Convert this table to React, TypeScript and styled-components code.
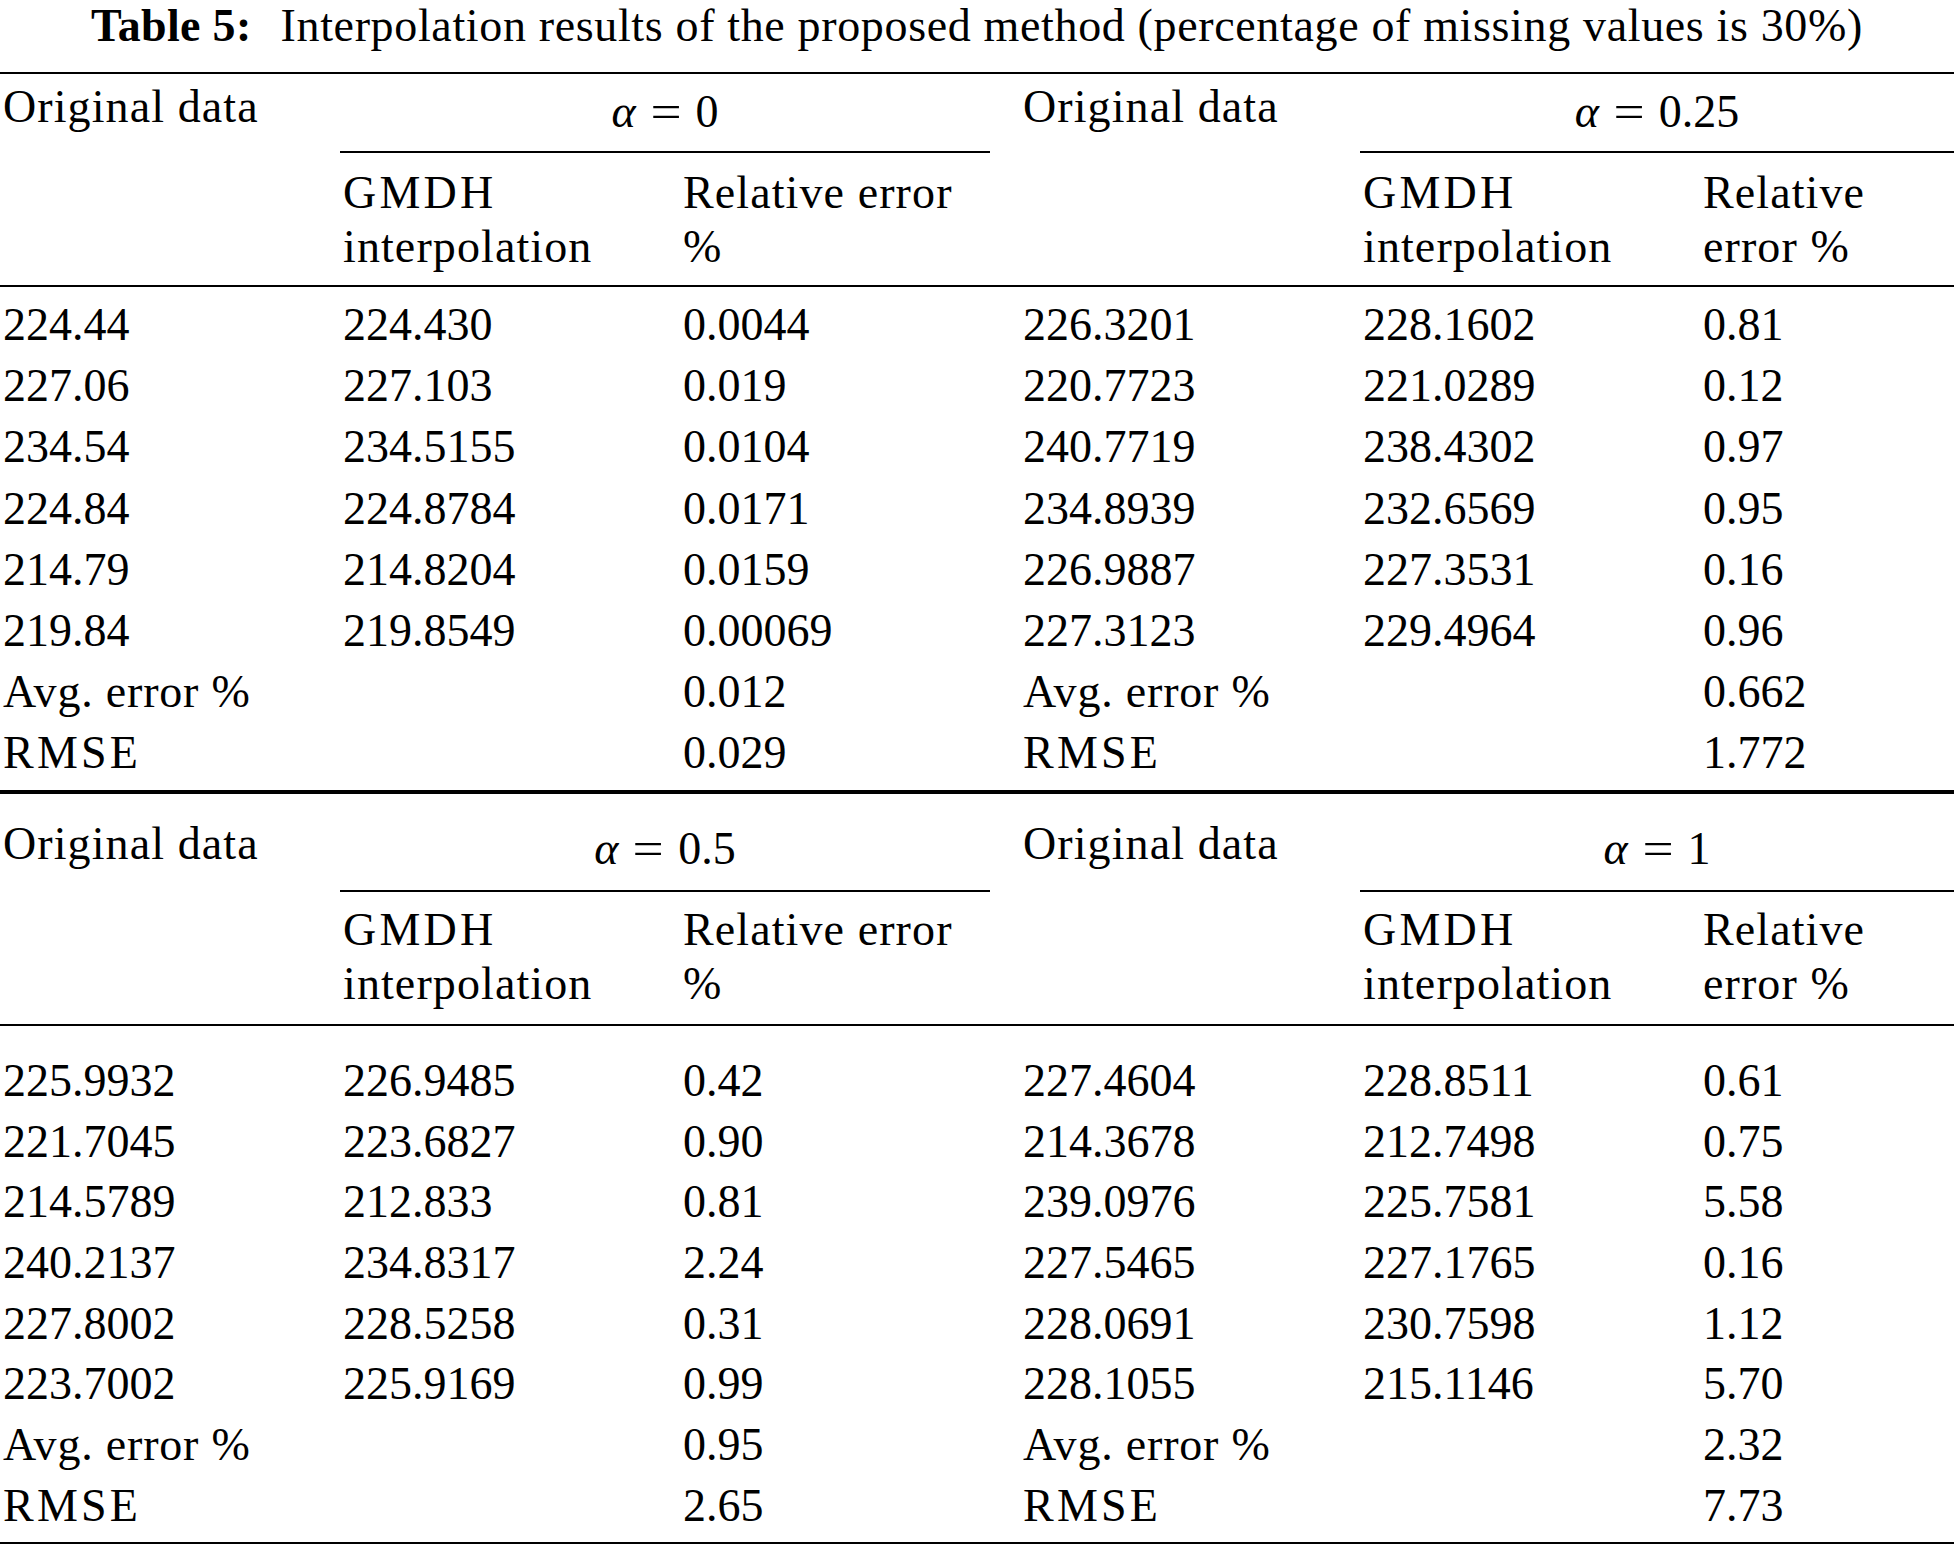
import React from "react";
import styled, { createGlobalStyle } from "styled-components";

const GlobalStyle = createGlobalStyle`
  html, body {
    margin: 0;
    padding: 0;
    background: #ffffff;
  }
  body {
    font-family: "Liberation Serif", "Times New Roman", serif;
    color: #000000;
  }
`;

const Page = styled.div`
  width: 1954px;
  font-size: 46px;
`;

const Caption = styled.div`
  height: 72px;
  line-height: 52px;
  text-align: center;
  white-space: nowrap;
  letter-spacing: 0.65px;
`;

const CaptionLabel = styled.b`
  font-weight: 700;
  margin-right: 29px;
  letter-spacing: 0.3px;
`;

const Block = styled.section`
  border-top: 2px solid #000;
  border-bottom: 2px solid #000;
`;

const Grid = styled.div`
  display: grid;
  grid-template-columns: repeat(5, 340px) 1fr;
  padding-left: 3px;
`;

const Head = styled(Grid)<{ $top: number; $bottom: number }>`
  padding-top: ${({ $top }) => $top}px;
  padding-bottom: ${({ $bottom }) => $bottom}px;
  border-bottom: 2px solid #000;
`;

const HeadLabel = styled.div`
  line-height: 54px;
  white-space: nowrap;
  letter-spacing: 1.1px;
`;

const GroupTitle = styled.div<{ $trim: number; $gap: number }>`
  grid-column: span 2;
  margin-left: -3px;
  margin-right: ${({ $trim }) => $trim}px;
  padding-top: 5px;
  padding-bottom: ${({ $gap }) => $gap}px;
  border-bottom: 2px solid #000;
  line-height: 54px;
  text-align: center;
  white-space: nowrap;
`;

const SubLabel = styled.div<{ $gap: number }>`
  padding-top: ${({ $gap }) => $gap}px;
  line-height: 54px;
  white-space: nowrap;
  letter-spacing: 1.1px;
`;

const Caps = styled.span`
  letter-spacing: 3.2px;
`;

const Alpha = styled.i`
  font-style: italic;
`;

const Eq = styled.span`
  display: inline-block;
  margin: 0 17px;
  transform: scaleX(1.2);
`;

const Body = styled(Grid)<{ $top: number; $bottom: number; $pitch: number }>`
  padding-top: ${({ $top }) => $top}px;
  padding-bottom: ${({ $bottom }) => $bottom}px;
  grid-auto-rows: ${({ $pitch }) => $pitch}px;
  line-height: ${({ $pitch }) => $pitch}px;
`;

const Cell = styled.div<{ $text?: boolean }>`
  white-space: nowrap;
  letter-spacing: ${({ $text }) => ($text ? "0.8px" : "0")};
`;

type Spacing = {
  headTop: number;
  titleGap: number;
  subGap: number;
  headBottom: number;
  bodyTop: number;
  bodyBottom: number;
  pitch: number;
};

const tableOne: string[][] = [
  ["224.44", "224.430", "0.0044", "226.3201", "228.1602", "0.81"],
  ["227.06", "227.103", "0.019", "220.7723", "221.0289", "0.12"],
  ["234.54", "234.5155", "0.0104", "240.7719", "238.4302", "0.97"],
  ["224.84", "224.8784", "0.0171", "234.8939", "232.6569", "0.95"],
  ["214.79", "214.8204", "0.0159", "226.9887", "227.3531", "0.16"],
  ["219.84", "219.8549", "0.00069", "227.3123", "229.4964", "0.96"],
  ["Avg. error %", "", "0.012", "Avg. error %", "", "0.662"],
  ["RMSE", "", "0.029", "RMSE", "", "1.772"],
];

const tableTwo: string[][] = [
  ["225.9932", "226.9485", "0.42", "227.4604", "228.8511", "0.61"],
  ["221.7045", "223.6827", "0.90", "214.3678", "212.7498", "0.75"],
  ["214.5789", "212.833", "0.81", "239.0976", "225.7581", "5.58"],
  ["240.2137", "234.8317", "2.24", "227.5465", "227.1765", "0.16"],
  ["227.8002", "228.5258", "0.31", "228.0691", "230.7598", "1.12"],
  ["223.7002", "225.9169", "0.99", "228.1055", "215.1146", "5.70"],
  ["Avg. error %", "", "0.95", "Avg. error %", "", "2.32"],
  ["RMSE", "", "2.65", "RMSE", "", "7.73"],
];

const AlphaTitle: React.FC<{ value: string }> = ({ value }) => (
  <>
    <Alpha>α</Alpha>
    <Eq>=</Eq>
    {value}
  </>
);

const renderValue = (value: string) =>
  value === "RMSE" ? <Caps>RMSE</Caps> : value;

interface ResultBlockProps {
  alphas: [string, string];
  rows: string[][];
  spacing: Spacing;
}

const ResultBlock: React.FC<ResultBlockProps> = ({ alphas, rows, spacing }) => (
  <Block>
    <Head $top={spacing.headTop} $bottom={spacing.headBottom}>
      <HeadLabel>Original data</HeadLabel>
      <GroupTitle $trim={33} $gap={spacing.titleGap}>
        <AlphaTitle value={alphas[0]} />
      </GroupTitle>
      <HeadLabel>Original data</HeadLabel>
      <GroupTitle $trim={0} $gap={spacing.titleGap}>
        <AlphaTitle value={alphas[1]} />
      </GroupTitle>

      <div />
      <SubLabel $gap={spacing.subGap}>
        <Caps>GMDH</Caps>
        <br />
        interpolation
      </SubLabel>
      <SubLabel $gap={spacing.subGap}>
        Relative error
        <br />%
      </SubLabel>
      <div />
      <SubLabel $gap={spacing.subGap}>
        <Caps>GMDH</Caps>
        <br />
        interpolation
      </SubLabel>
      <SubLabel $gap={spacing.subGap}>
        Relative
        <br />
        error %
      </SubLabel>
    </Head>
    <Body $top={spacing.bodyTop} $bottom={spacing.bodyBottom} $pitch={spacing.pitch}>
      {rows.map((row, i) =>
        row.map((value, j) => (
          <Cell key={`${i}-${j}`} $text={/[a-z]/i.test(value)}>
            {renderValue(value)}
          </Cell>
        ))
      )}
    </Body>
  </Block>
);

export default function App() {
  return (
    <>
      <GlobalStyle />
      <Page>
        <Caption>
          <CaptionLabel>Table 5:</CaptionLabel>
          Interpolation results of the proposed method (percentage of missing values is 30%)
        </Caption>
        <ResultBlock
          alphas={["0", "0.25"]}
          rows={tableOne}
          spacing={{
            headTop: 5.5,
            titleGap: 12.5,
            subGap: 12.5,
            headBottom: 11.5,
            bodyTop: 7,
            bodyBottom: 6,
            pitch: 61.2,
          }}
        />
        <ResultBlock
          alphas={["0.5", "1"]}
          rows={tableTwo}
          spacing={{
            headTop: 23.5,
            titleGap: 14,
            subGap: 11,
            headBottom: 13,
            bodyTop: 25,
            bodyBottom: 5,
            pitch: 60.7,
          }}
        />
      </Page>
    </>
  );
}
